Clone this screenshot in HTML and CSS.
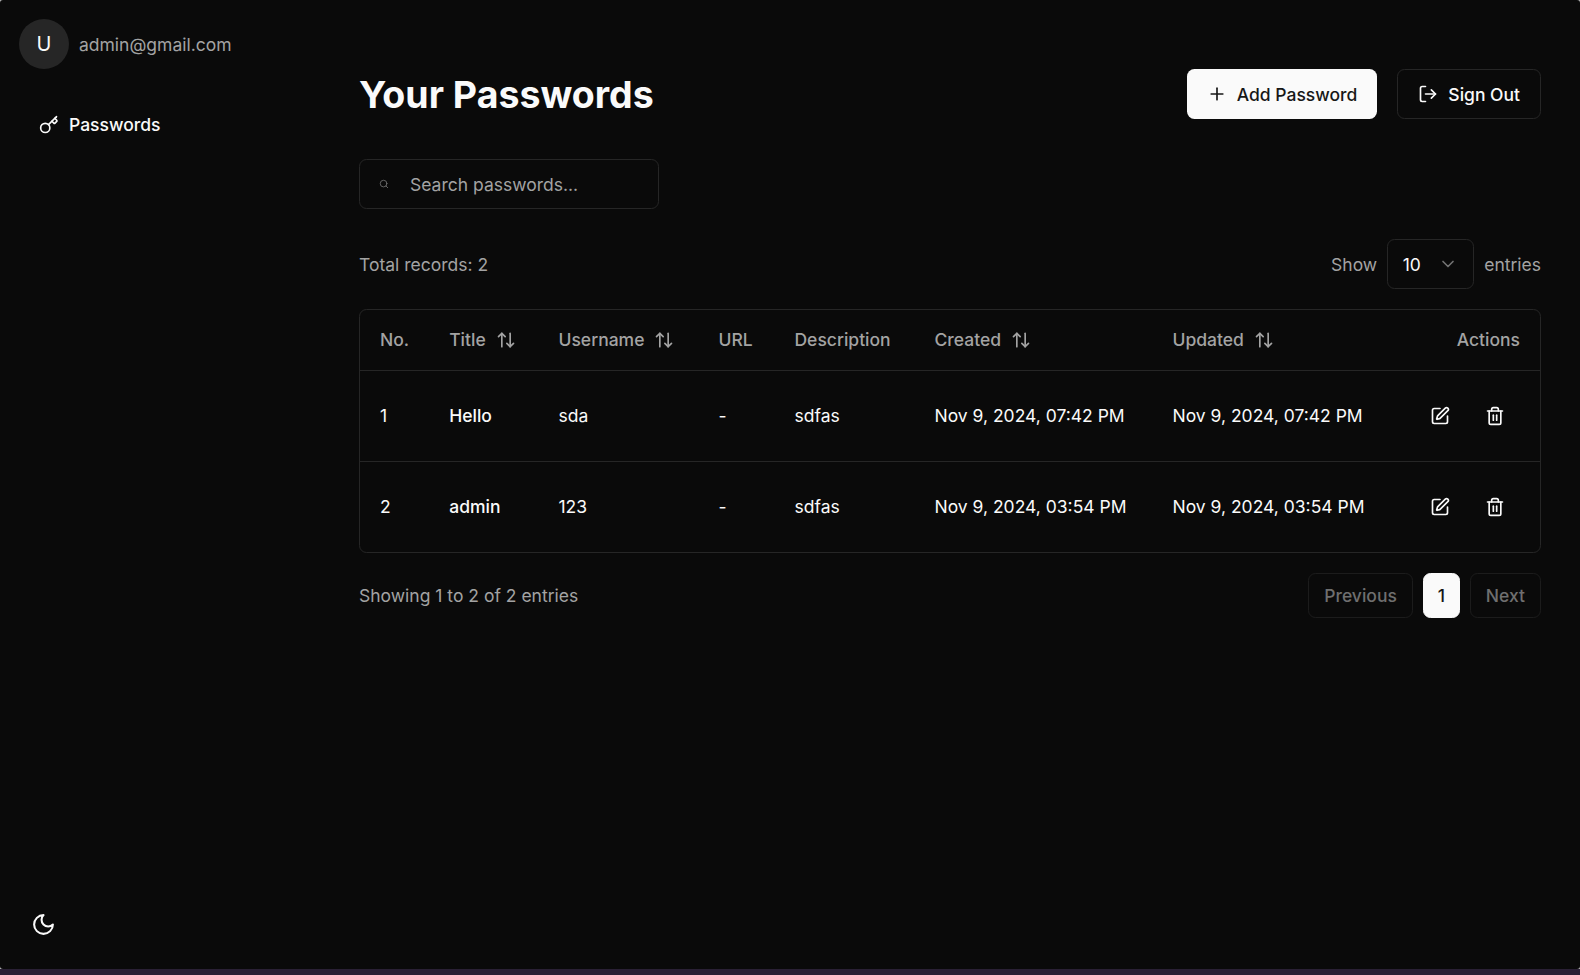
FILE: index.html
```html
<!DOCTYPE html>
<html lang="en">
<head>
    <meta charset="UTF-8">
    <meta name="viewport" content="width=device-width, initial-scale=1.0">
    <title>Your Passwords</title>
    <link rel="stylesheet" href="styles.css">
</head>
<body>
    <div class="shell">
        <div class="app">
            <aside class="sidebar">
                <div class="user">
                    <div class="avatar">U</div>
                    <span class="email">admin@gmail.com</span>
                </div>
                <a class="side-link" href="#">
                    <svg class="icon" viewBox="0 0 24 24"><path d="m15.5 7.5 2.3 2.3a1 1 0 0 0 1.4 0l2.1-2.1a1 1 0 0 0 0-1.4L19 4"/><path d="m21 2-9.6 9.6"/><circle cx="7.5" cy="15.5" r="5.5"/></svg>
                    Passwords
                </a>
                <button class="theme-btn">
                    <svg class="icon-lg" viewBox="0 0 24 24"><path d="M12 3a6 6 0 0 0 9 9 9 9 0 1 1-9-9Z"/></svg>
                </button>
            </aside>
            <main class="content">
                <div class="top-row">
                    <h1>Your Passwords</h1>
                    <div class="top-actions">
                        <button class="btn btn-primary">
                            <svg class="icon" viewBox="0 0 24 24"><path d="M5 12h14"/><path d="M12 5v14"/></svg>
                            Add Password
                        </button>
                        <button class="btn btn-outline">
                            <svg class="icon" viewBox="0 0 24 24"><path d="M9 21H5a2 2 0 0 1-2-2V5a2 2 0 0 1 2-2h4"/><polyline points="16 17 21 12 16 7"/><line x1="21" y1="12" x2="9" y2="12"/></svg>
                            Sign Out
                        </button>
                    </div>
                </div>

                <div class="search">
                    <svg class="icon-xs" viewBox="0 0 24 24"><circle cx="11" cy="11" r="8"/><path d="m21 21-4.3-4.3"/></svg>
                    <span>Search passwords...</span>
                </div>

                <div class="table-bar">
                    <span>Total records: 2</span>
                    <div class="page-size">
                        <span>Show</span>
                        <div class="select">
                            <span>10</span>
                            <svg class="icon" viewBox="0 0 24 24"><path d="m6 9 6 6 6-6"/></svg>
                        </div>
                        <span>entries</span>
                    </div>
                </div>

                <div class="table-wrap">
                    <table>
                        <colgroup>
                            <col class="col-no">
                            <col class="col-title">
                            <col class="col-user">
                            <col class="col-url">
                            <col class="col-desc">
                            <col class="col-date">
                            <col class="col-date2">
                            <col>
                        </colgroup>
                        <thead>
                            <tr>
                                <th>No.</th>
                                <th><span class="sort">Title <svg class="icon" viewBox="0 0 24 24"><path d="m21 16-4 4-4-4"/><path d="M17 20V4"/><path d="m3 8 4-4 4 4"/><path d="M7 4v16"/></svg></span></th>
                                <th><span class="sort">Username <svg class="icon" viewBox="0 0 24 24"><path d="m21 16-4 4-4-4"/><path d="M17 20V4"/><path d="m3 8 4-4 4 4"/><path d="M7 4v16"/></svg></span></th>
                                <th>URL</th>
                                <th>Description</th>
                                <th><span class="sort">Created <svg class="icon" viewBox="0 0 24 24"><path d="m21 16-4 4-4-4"/><path d="M17 20V4"/><path d="m3 8 4-4 4 4"/><path d="M7 4v16"/></svg></span></th>
                                <th><span class="sort">Updated <svg class="icon" viewBox="0 0 24 24"><path d="m21 16-4 4-4-4"/><path d="M17 20V4"/><path d="m3 8 4-4 4 4"/><path d="M7 4v16"/></svg></span></th>
                                <th class="right">Actions</th>
                            </tr>
                        </thead>
                        <tbody>
                            <tr>
                                <td>1</td>
                                <td class="strong">Hello</td>
                                <td>sda</td>
                                <td>-</td>
                                <td>sdfas</td>
                                <td>Nov 9, 2024, 07:42 PM</td>
                                <td>Nov 9, 2024, 07:42 PM</td>
                                <td>
                                    <div class="row-actions">
                                        <svg class="icon" viewBox="0 0 24 24"><path d="M12 3H5a2 2 0 0 0-2 2v14a2 2 0 0 0 2 2h14a2 2 0 0 0 2-2v-7"/><path d="M18.375 2.625a1 1 0 0 1 3 3l-9.013 9.014a2 2 0 0 1-.853.505l-2.873.84a.5.5 0 0 1-.62-.62l.84-2.873a2 2 0 0 1 .506-.852z"/></svg>
                                        <svg class="icon" viewBox="0 0 24 24"><path d="M3 6h18"/><path d="M19 6v14c0 1-1 2-2 2H7c-1 0-2-1-2-2V6"/><path d="M8 6V4c0-1 1-2 2-2h4c1 0 2 1 2 2v2"/><path d="M10 11v6"/><path d="M14 11v6"/></svg>
                                    </div>
                                </td>
                            </tr>
                            <tr>
                                <td>2</td>
                                <td class="strong">admin</td>
                                <td>123</td>
                                <td>-</td>
                                <td>sdfas</td>
                                <td>Nov 9, 2024, 03:54 PM</td>
                                <td>Nov 9, 2024, 03:54 PM</td>
                                <td>
                                    <div class="row-actions">
                                        <svg class="icon" viewBox="0 0 24 24"><path d="M12 3H5a2 2 0 0 0-2 2v14a2 2 0 0 0 2 2h14a2 2 0 0 0 2-2v-7"/><path d="M18.375 2.625a1 1 0 0 1 3 3l-9.013 9.014a2 2 0 0 1-.853.505l-2.873.84a.5.5 0 0 1-.62-.62l.84-2.873a2 2 0 0 1 .506-.852z"/></svg>
                                        <svg class="icon" viewBox="0 0 24 24"><path d="M3 6h18"/><path d="M19 6v14c0 1-1 2-2 2H7c-1 0-2-1-2-2V6"/><path d="M8 6V4c0-1 1-2 2-2h4c1 0 2 1 2 2v2"/><path d="M10 11v6"/><path d="M14 11v6"/></svg>
                                    </div>
                                </td>
                            </tr>
                        </tbody>
                    </table>
                </div>

                <div class="table-foot">
                    <span>Showing 1 to 2 of 2 entries</span>
                    <div class="pager">
                        <button class="page-btn disabled">Previous</button>
                        <button class="page-btn current">1</button>
                        <button class="page-btn disabled">Next</button>
                    </div>
                </div>
            </main>
        </div>
    </div>
    <div class="strip"></div>
</body>
</html>
```

FILE: styles.css
```css
* {
    box-sizing: border-box;
}
html, body {
    height: 100%;
}
body {
    margin: 0;
    display: flex;
    flex-direction: column;
    background-color: #2a2035;
    color: #fafafa;
    font-family: Inter, "Liberation Sans", sans-serif;
    font-size: 17.5px;
    line-height: 25px;
    overflow: hidden;
}
button {
    font: inherit;
    color: inherit;
    background: none;
    border: 0;
    padding: 0;
}
svg {
    fill: none;
    stroke: currentColor;
    stroke-width: 2;
    stroke-linecap: round;
    stroke-linejoin: round;
    flex-shrink: 0;
}
.icon {
    width: 20px;
    height: 20px;
}
.icon-lg {
    width: 25px;
    height: 25px;
    display: block;
}
.icon-xs {
    width: 10px;
    height: 10px;
}
.shell {
    flex: 1;
    display: flex;
    min-height: 0;
    background-color: #bdbdbd;
}
.app {
    flex: 1;
    display: flex;
    background-color: #0a0a0a;
    border-radius: 3px;
}
.strip {
    height: 6px;
}
.sidebar {
    width: 319px;
    padding: 19px 20px 20px 19px;
    display: flex;
    flex-direction: column;
}
.user {
    display: flex;
    align-items: center;
    gap: 10px;
}
.avatar {
    width: 50px;
    height: 50px;
    border-radius: 50%;
    background-color: #262626;
    display: flex;
    align-items: center;
    justify-content: center;
    font-size: 20px;
}
.email {
    color: #a3a3a3;
}
.side-link {
    display: flex;
    align-items: center;
    gap: 10px;
    margin: 43px 0 0 20px;
    color: #fafafa;
    font-weight: 500;
    text-decoration: none;
}
.theme-btn {
    margin-top: auto;
    margin-left: 12px;
    margin-bottom: 12px;
    width: 25px;
}
.content {
    flex: 1;
    padding: 69px 39px 0 40px;
}
.top-row {
    display: flex;
    justify-content: space-between;
    align-items: center;
}
h1 {
    margin: 0;
    padding-top: 1px;
    font-size: 37.5px;
    line-height: 50px;
    height: 50px;
    font-weight: 700;
}
.top-actions {
    display: flex;
    gap: 20px;
}
.btn {
    height: 50px;
    padding: 0 20px;
    display: flex;
    align-items: center;
    gap: 10px;
    border-radius: 7.5px;
    font-weight: 500;
}
.btn-primary {
    background-color: #fafafa;
    color: #171717;
}
.btn-outline {
    border: 1px solid #262626;
}
.search {
    width: 300px;
    height: 50px;
    margin-top: 40px;
    padding: 0 0 0 19px;
    display: flex;
    align-items: center;
    gap: 21px;
    border: 1px solid #262626;
    border-radius: 7.5px;
    color: #a3a3a3;
}
.search svg {
    color: #737373;
}
.table-bar {
    margin-top: 30px;
    display: flex;
    justify-content: space-between;
    align-items: center;
    color: #a3a3a3;
}
.page-size {
    display: flex;
    align-items: center;
    gap: 10px;
}
.select {
    width: 87px;
    height: 50px;
    padding: 0 15px 0 14.5px;
    display: flex;
    align-items: center;
    justify-content: space-between;
    border: 1px solid #262626;
    border-radius: 7.5px;
    color: #fafafa;
}
.select svg {
    color: #737373;
}
.table-wrap {
    margin-top: 20px;
    border: 1px solid #262626;
    border-radius: 7.5px;
}
table {
    width: 100%;
    border-collapse: collapse;
    table-layout: fixed;
}
.col-no { width: 69.2px; }
.col-title { width: 109.3px; }
.col-user { width: 160px; }
.col-url { width: 76px; }
.col-desc { width: 140px; }
.col-date { width: 238px; }
.col-date2 { width: 238px; }
th {
    height: 60px;
    padding: 0 0 0 20px;
    text-align: left;
    font-weight: 500;
    color: #a3a3a3;
    border-bottom: 1px solid #262626;
}
th.right {
    padding: 0 20px 0 0;
    text-align: right;
}
.sort {
    display: inline-flex;
    align-items: center;
    gap: 10px;
}
td {
    height: 91px;
    padding: 0 0 0 20px;
    border-bottom: 1px solid #262626;
    white-space: nowrap;
}
tr:last-child td {
    border-bottom: 0;
}
td.strong {
    font-weight: 500;
}
.row-actions {
    display: flex;
    justify-content: flex-end;
    gap: 35px;
    padding-right: 35px;
}
.table-foot {
    margin-top: 20px;
    display: flex;
    justify-content: space-between;
    align-items: center;
    color: #a3a3a3;
}
.pager {
    display: flex;
    gap: 10px;
}
.page-btn {
    height: 45px;
    padding: 0 15px;
    border-radius: 7.5px;
    font-weight: 500;
    border: 1px solid #262626;
}
.page-btn.disabled {
    color: #6f6f6f;
    border-color: #1c1c1c;
}
.page-btn.current {
    width: 37px;
    padding: 0;
    background-color: #fafafa;
    color: #171717;
    border-color: #fafafa;
}
```
